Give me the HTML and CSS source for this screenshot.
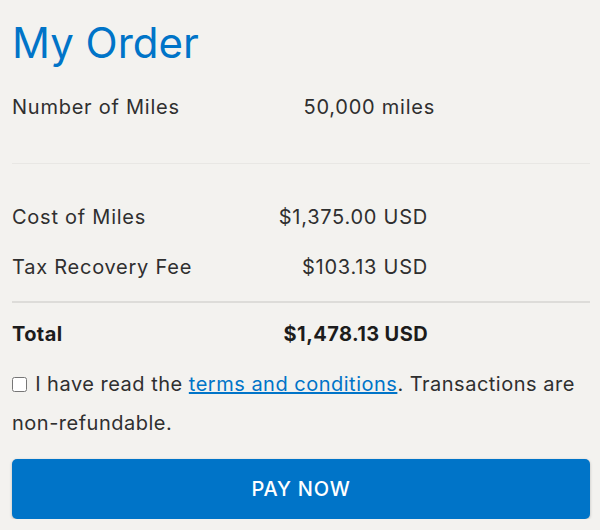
FILE: index.html
```html
<!DOCTYPE html>
<html lang="en">

<head>
    <meta charset="UTF-8">
    <meta name="viewport" content="width=device-width, initial-scale=1.0">
    <title>My Order</title>
    <link rel="stylesheet" href="styles.css">
</head>

<body>

    <div class="order">
        <h1 class="order-title">My Order</h1>

        <div class="order-section">
            <div class="order-row">
                <span class="row-label">Number of Miles</span>
                <span class="row-value miles">50,000 miles</span>
            </div>
        </div>

        <div class="order-section costs">
            <div class="order-row">
                <span class="row-label">Cost of Miles</span>
                <span class="row-value">$1,375.00 USD</span>
            </div>
            <div class="order-row">
                <span class="row-label">Tax Recovery Fee</span>
                <span class="row-value">$103.13 USD</span>
            </div>
        </div>

        <div class="order-row total">
            <span class="row-label">Total</span>
            <span class="row-value">$1,478.13 USD</span>
        </div>

        <label class="terms">
            <input type="checkbox" class="terms-check">
            I have read the <a href="#">terms and conditions</a>. Transactions are non-refundable.
        </label>

        <button class="pay-btn">PAY NOW</button>
    </div>

</body>

</html>
```

FILE: styles.css
```css
body {
    margin: 0;
    background: #f3f2ef;
    color: #2f2f2f;
    font-family: Inter, "Open Sans", Arial, sans-serif;
    font-size: 20px;
    letter-spacing: 0.5px;
}

.order {
    padding: 0 10px 0 12px;
}

.order-title {
    margin: 0;
    padding-top: 18px;
    font-size: 42px;
    line-height: 50px;
    font-weight: 400;
    letter-spacing: 0;
    color: #0074c8;
}

.order-section {
    padding: 24px 0 41px;
    border-bottom: 1px solid #e8e7e4;
}

.order-section.costs {
    padding: 38px 0 19px;
    border-bottom: 2px solid #dddcd9;
    display: flex;
    flex-direction: column;
    gap: 20px;
}

.order-row {
    display: grid;
    grid-template-columns: 1fr auto;
    width: 416px;
    line-height: 30px;
    letter-spacing: 0.75px;
}

.row-value {
    text-align: right;
}

.row-value.miles {
    margin-right: -7px;
}

.order-row.total {
    padding-top: 16px;
    font-weight: 700;
    letter-spacing: 0.4px;
    color: #1c1c1c;
}

.terms {
    display: block;
    margin-top: 16px;
    line-height: 39px;
}

.terms-check {
    width: 15px;
    height: 15px;
    margin: 0 2px 0 0;
    vertical-align: -1px;
}

.terms a {
    color: #0074c8;
    text-decoration: underline;
}

.pay-btn {
    display: block;
    width: 100%;
    height: 60px;
    margin-top: 16px;
    background: #0074c8;
    color: white;
    border: none;
    border-radius: 5px;
    font-family: inherit;
    font-size: 20px;
    font-weight: 500;
    letter-spacing: 0.8px;
    box-shadow: 0 1px 3px rgba(0, 0, 0, 0.25);
    cursor: pointer;
}
```
